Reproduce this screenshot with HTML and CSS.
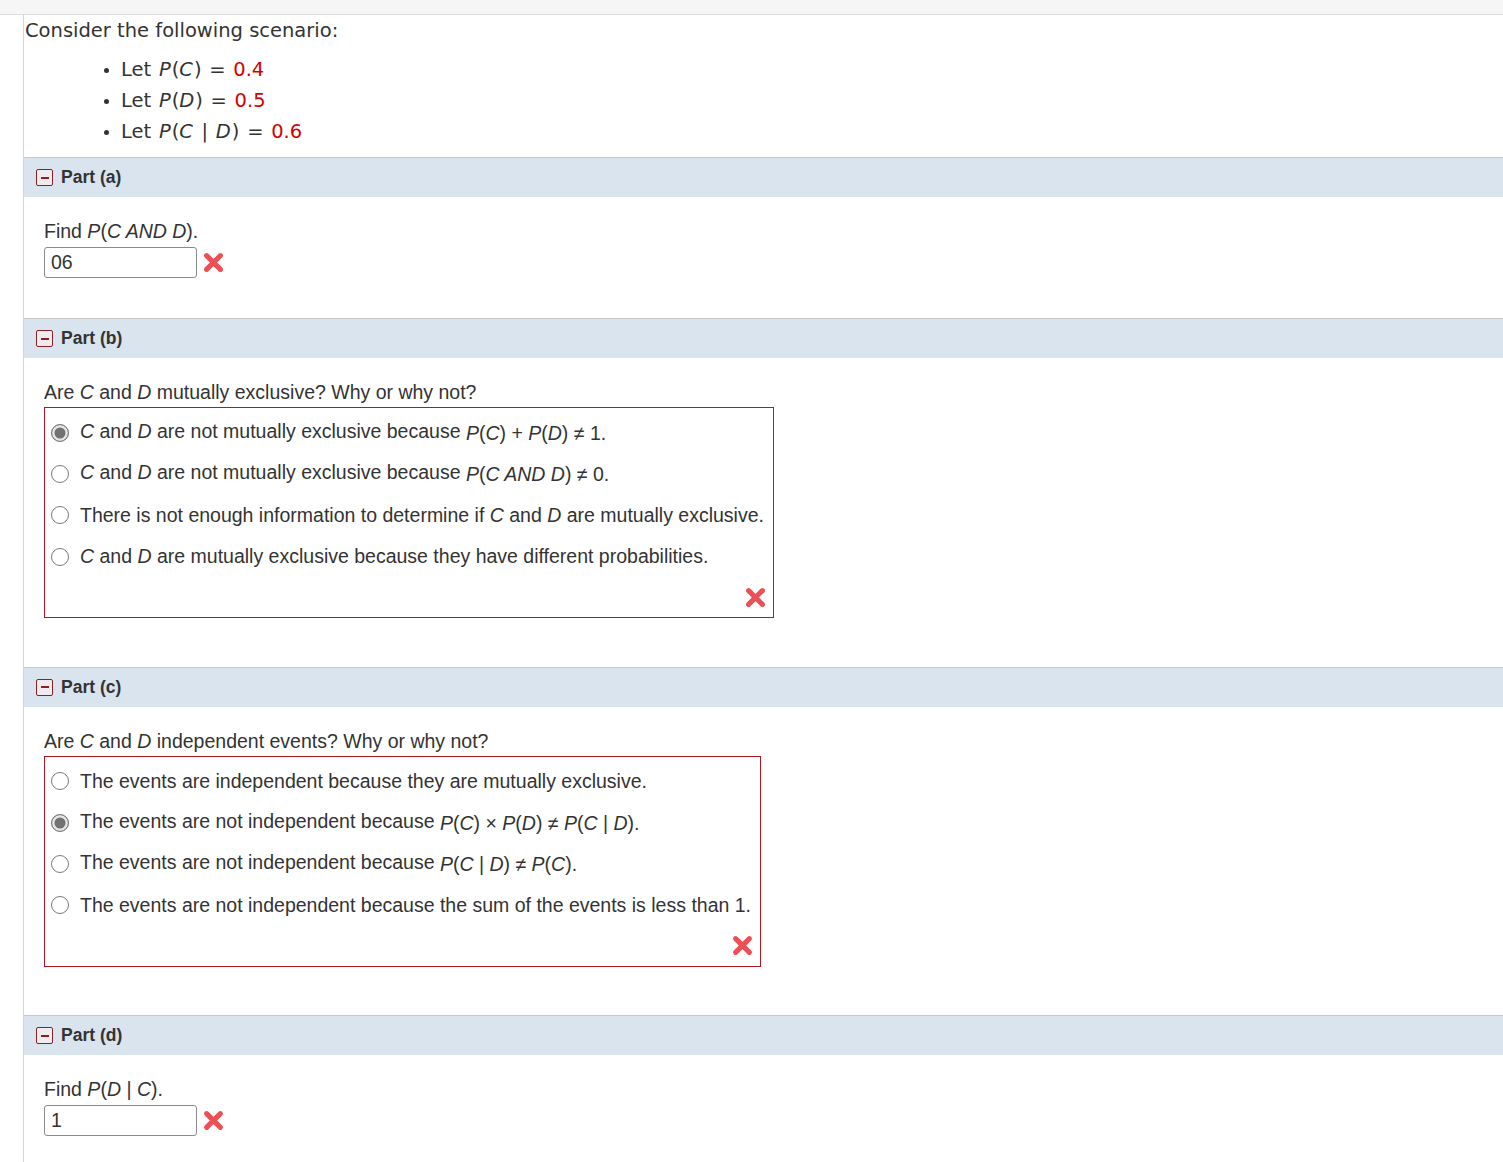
FILE: index.html
```html
<!DOCTYPE html>
<html lang="en">
<head>
  <meta charset="UTF-8">
  <title>Probability Question</title>
  <link rel="stylesheet" href="styles.css">
</head>
<body>
  <div class="top-strip"></div>
  <div class="question">
    <div class="scenario">
      <p class="intro">Consider the following scenario:</p>
      <ul>
        <li>Let <i>P</i>(<i>C</i>) = <span class="given">0.4</span></li>
        <li>Let <i>P</i>(<i>D</i>) = <span class="given">0.5</span></li>
        <li>Let <i>P</i>(<i>C</i> | <i>D</i>) = <span class="given">0.6</span></li>
      </ul>
    </div>

    <!-- Part (a) -->
    <div class="part">
      <div class="part-header"><span class="toggle"></span>Part (a)</div>
      <div class="part-body">
        <div class="prompt">Find <i>P</i>(<i>C AND D</i>).</div>
        <div class="answer-row">
          <input type="text" class="answer" value="06">
          <svg class="wrong" viewBox="0 0 20 20"><path d="M4 4 L16 16 M16 4 L4 16"/></svg>
        </div>
      </div>
    </div>

    <!-- Part (b) -->
    <div class="part">
      <div class="part-header"><span class="toggle"></span>Part (b)</div>
      <div class="part-body boxed">
        <div class="prompt">Are <i>C</i> and <i>D</i> mutually exclusive? Why or why not?</div>
        <div class="choices">
          <label class="choice"><span class="radio checked"></span><span><i>C</i> and <i>D</i> are not mutually exclusive because <span class="math"><i>P</i>(<i>C</i>) + <i>P</i>(<i>D</i>) &ne; 1.</span></span></label>
          <label class="choice"><span class="radio"></span><span><i>C</i> and <i>D</i> are not mutually exclusive because <span class="math"><i>P</i>(<i>C AND D</i>) &ne; 0.</span></span></label>
          <label class="choice"><span class="radio"></span><span>There is not enough information to determine if <i>C</i> and <i>D</i> are mutually exclusive.</span></label>
          <label class="choice"><span class="radio"></span><span><i>C</i> and <i>D</i> are mutually exclusive because they have different probabilities.</span></label>
          <div class="mark">
            <svg class="wrong" viewBox="0 0 20 20"><path d="M4 4 L16 16 M16 4 L4 16"/></svg>
          </div>
        </div>
      </div>
    </div>

    <!-- Part (c) -->
    <div class="part">
      <div class="part-header"><span class="toggle"></span>Part (c)</div>
      <div class="part-body boxed">
        <div class="prompt">Are <i>C</i> and <i>D</i> independent events? Why or why not?</div>
        <div class="choices">
          <label class="choice"><span class="radio"></span><span>The events are independent because they are mutually exclusive.</span></label>
          <label class="choice"><span class="radio checked"></span><span>The events are not independent because <span class="math"><i>P</i>(<i>C</i>) &times; <i>P</i>(<i>D</i>) &ne; <i>P</i>(<i>C</i> | <i>D</i>).</span></span></label>
          <label class="choice"><span class="radio"></span><span>The events are not independent because <span class="math"><i>P</i>(<i>C</i> | <i>D</i>) &ne; <i>P</i>(<i>C</i>).</span></span></label>
          <label class="choice"><span class="radio"></span><span>The events are not independent because the sum of the events is less than 1.</span></label>
          <div class="mark">
            <svg class="wrong" viewBox="0 0 20 20"><path d="M4 4 L16 16 M16 4 L4 16"/></svg>
          </div>
        </div>
      </div>
    </div>

    <!-- Part (d) -->
    <div class="part">
      <div class="part-header"><span class="toggle"></span>Part (d)</div>
      <div class="part-body">
        <div class="prompt">Find <i>P</i>(<i>D</i> | <i>C</i>).</div>
        <div class="answer-row">
          <input type="text" class="answer" value="1">
          <svg class="wrong" viewBox="0 0 20 20"><path d="M4 4 L16 16 M16 4 L4 16"/></svg>
        </div>
      </div>
    </div>
  </div>
</body>
</html>
```

FILE: styles.css
```css
/* General Styles */
body {
  margin: 0;
  padding: 0;
  background: #fff;
  color: #333;
  font-family: "Liberation Sans", Arial, sans-serif;
}

.top-strip {
  height: 14px;
  background: #f6f6f6;
  border-bottom: 1px solid #dcdcdc;
}

.question {
  margin-left: 23px;
  border-left: 1px solid #d4d4d4;
  min-height: 1200px;
}

/* Scenario */
.scenario {
  font-family: "DejaVu Sans", Verdana, sans-serif;
  font-size: 19.5px;
  color: #333;
}
.scenario .intro {
  margin: 0;
  padding: 4px 0 0 1px;
  line-height: 24px;
}
.scenario ul {
  margin: 0;
  padding: 11px 0 10px 97px;
}
.scenario li {
  line-height: 31px;
  word-spacing: 1.5px;
}
.scenario li i {
  padding-right: 1px;
}
.scenario li::marker {
  font-size: 16px;
}
.given {
  color: #d40000;
}

/* Parts */
.part-header {
  display: flex;
  align-items: center;
  height: 39px;
  border-top: 1px solid #c9c9c9;
  background: #d9e4ee;
  font-weight: bold;
  font-size: 17.5px;
  color: #333;
  padding-left: 12px;
}
.toggle {
  width: 15px;
  height: 15px;
  border: 1.5px solid #8a1f28;
  border-radius: 2px;
  background: #f0ecee;
  margin-right: 8px;
  display: flex;
  align-items: center;
  justify-content: center;
}
.toggle::after {
  content: "";
  width: 8px;
  height: 2px;
  background: #8a1f28;
}

.part-body {
  padding: 22px 0 40px 20px;
  font-size: 19.5px;
}
.part-body.boxed {
  padding-bottom: 48.5px;
}
.prompt {
  line-height: 24px;
}

.answer-row {
  display: flex;
  align-items: center;
  margin-top: 4px;
}
.answer {
  width: 153px;
  height: 31px;
  box-sizing: border-box;
  border: 1px solid #8a8a8a;
  border-radius: 3px;
  padding: 0 6px;
  font-family: "Liberation Sans", Arial, sans-serif;
  font-size: 19.5px;
  color: #333;
}

.wrong {
  width: 23px;
  height: 23px;
  margin-left: 5px;
}
.wrong path {
  stroke: #ec5057;
  stroke-width: 4.4;
  stroke-linecap: round;
  fill: none;
}

/* Multiple choice */
.choices {
  display: inline-block;
  margin-top: 3px;
  border: 1px solid #b5161f;
  padding: 4px 9px 0 6px;
}
.choice {
  display: flex;
  align-items: center;
  height: 41.3px;
}
.radio {
  width: 16px;
  height: 16px;
  border: 1px solid #7a7a7a;
  border-radius: 50%;
  margin-right: 11px;
  flex-shrink: 0;
  box-sizing: content-box;
  background: #fff;
}
.radio.checked {
  background: #727272;
  box-shadow: inset 0 0 0 2.5px #e6e6e6;
}
.math {
  vertical-align: -2px;
}
.mark {
  display: flex;
  justify-content: flex-end;
  height: 40px;
  align-items: center;
  margin-right: -3px;
}
```
